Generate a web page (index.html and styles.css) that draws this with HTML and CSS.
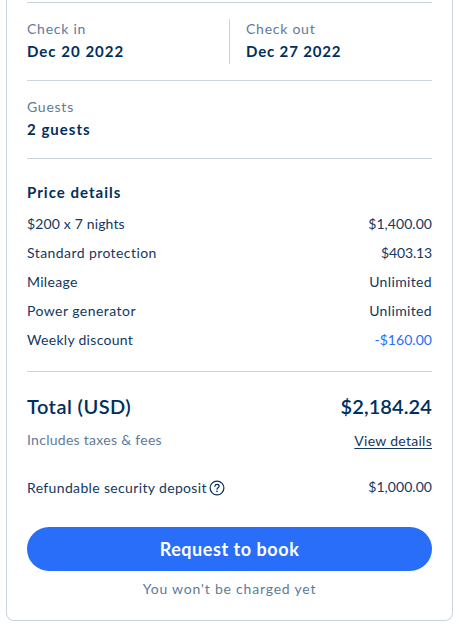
FILE: index.html
```html
<!DOCTYPE html>
<html lang="en">
<head>
<meta charset="utf-8">
<title>Booking summary</title>
<link rel="stylesheet" href="styles.css">
</head>
<body>
<main class="card">
  <section class="dates">
    <div class="field">
      <div class="label">Check in</div>
      <div class="value">Dec 20 2022</div>
    </div>
    <div class="field field-end">
      <div class="label">Check out</div>
      <div class="value value-end">Dec 27 2022</div>
    </div>
  </section>
  <section class="guests">
    <div class="label">Guests</div>
    <div class="value">2 guests</div>
  </section>
  <section class="prices">
    <h2>Price details</h2>
    <div class="row"><span class="nights">$200 x 7 nights</span><span class="amount">$1,400.00</span></div>
    <div class="row"><span class="protection">Standard protection</span><span class="amount tight">$403.13</span></div>
    <div class="row"><span>Mileage</span><span class="plain">Unlimited</span></div>
    <div class="row"><span class="generator">Power generator</span><span class="plain">Unlimited</span></div>
    <div class="row"><span>Weekly discount</span><span class="amount discount">-$160.00</span></div>
  </section>
  <section class="summary">
    <div class="total"><span class="total-label">Total (USD)</span><span>$2,184.24</span></div>
    <div class="taxes"><span class="muted">Includes taxes &amp; fees</span><a href="#" class="details">View details</a></div>
    <div class="deposit">
      <span class="deposit-label">Refundable security deposit
        <svg class="help" viewBox="0 0 16 16" fill="none" stroke="currentColor" stroke-linecap="round"><circle cx="8" cy="8" r="6.9" stroke-width="1.2"/><path d="M5.9 6.3C6 5 6.8 4.4 8 4.4s2.1.7 2.1 1.8c0 1.5-2.1 1.5-2.1 3" stroke-width="1.2"/><circle cx="8" cy="11.4" r=".8" fill="currentColor" stroke="none"/></svg>
      </span>
      <span class="amount">$1,000.00</span>
    </div>
    <button class="book">Request to book</button>
    <p class="note">You won't be charged yet</p>
  </section>
</main>
</body>
</html>
```
FILE: styles.css
```css
* { box-sizing: border-box; }

body {
  margin: 0;
  background: #fff;
  color: #143860;
  font: 14px/20px Lato, sans-serif;
  overflow: hidden;
}

.card {
  width: 447px;
  height: 621px;
  margin-left: 6px;
  padding: 2px 20px 0;
  border: 1px solid #cad5df;
  border-top: 0;
  border-radius: 0 0 8px 8px;
}

.dates {
  display: flex;
  height: 79px;
  padding-top: 16px;
  border-top: 1px solid #cad5df;
  border-bottom: 1px solid #cad5df;
}

.field { width: 202px; height: 45px; }

.field-end {
  padding-left: 16px;
  border-left: 1px solid #cad5df;
}

.label {
  color: #5e7b98;
  letter-spacing: .75px;
}

.value {
  margin-top: 1px;
  color: #002f5d;
  font-size: 15px;
  line-height: 22px;
  font-weight: 700;
  letter-spacing: 1.02px;
}

.value-end { letter-spacing: .85px; }

.guests {
  height: 78px;
  padding-top: 16px;
  border-bottom: 1px solid #cad5df;
}

.prices {
  height: 213px;
  padding-top: 21px;
  border-bottom: 1px solid #cad5df;
}

h2 {
  margin: 0 0 6px;
  color: #002f5d;
  font-size: 15px;
  line-height: 24px;
  font-weight: 700;
  letter-spacing: 1.02px;
}

.row {
  display: flex;
  justify-content: space-between;
  height: 29px;
  line-height: 27px;
  letter-spacing: .3px;
}

.nights { letter-spacing: .15px; }
.protection { letter-spacing: .42px; }
.generator { letter-spacing: .45px; }
.plain { letter-spacing: .35px; }
.amount { letter-spacing: .05px; }
.tight { letter-spacing: -.15px; }
.discount { color: #286ef8; }

.summary { padding-top: 20px; }

.total {
  display: flex;
  justify-content: space-between;
  color: #002f5d;
  font-size: 20px;
  line-height: 28px;
  font-weight: 600;
  letter-spacing: .1px;
}

.total-label { letter-spacing: .45px; }

.taxes {
  display: flex;
  justify-content: space-between;
  height: 49px;
  padding-top: 10px;
  letter-spacing: .28px;
}

.muted { color: #5e7b98; }

.details {
  margin-top: 1px;
  color: inherit;
  text-decoration: underline;
  text-underline-offset: 2px;
}

.deposit {
  display: flex;
  justify-content: space-between;
  height: 58px;
  padding-top: 8px;
}

.deposit-label {
  display: flex;
  align-items: center;
  gap: 2px;
  height: 20px;
  margin-top: 1px;
  letter-spacing: .35px;
}

.help { width: 16px; height: 16px; color: #002f5d; }

.book {
  display: block;
  width: 405px;
  height: 44px;
  padding: 0;
  border: 0;
  border-radius: 22px;
  background: #286ef8;
  color: #fff;
  font: 700 18px/44px Lato, sans-serif;
  letter-spacing: .55px;
}

.note {
  margin: 8px 0 0;
  color: #5e7b98;
  text-align: center;
  letter-spacing: .8px;
}
```
